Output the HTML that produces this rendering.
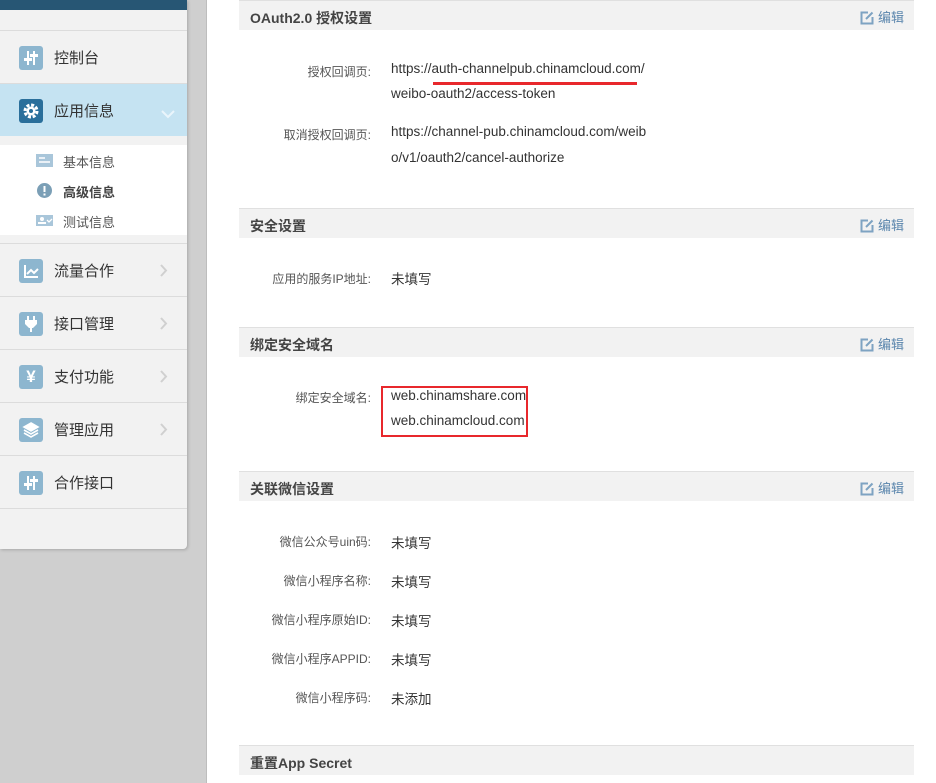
<!DOCTYPE html>
<html><head><meta charset="utf-8"><style>
*{margin:0;padding:0;box-sizing:border-box}
body{width:936px;height:783px;overflow:hidden;background:#fff;font-family:"Liberation Sans","Noto Sans CJK SC",sans-serif;position:relative}
.gbg{position:absolute;left:0;top:0;width:207px;height:783px;background:#cfcfcf;border-right:1px solid #bdbdbd}
.side{position:absolute;left:0;top:0;width:187px;height:549px;background:#f2f2f2;border-radius:0 0 4px 0;box-shadow:1px 1px 3px rgba(0,0,0,.2)}
.topbar{position:absolute;left:0;top:0;width:187px;height:10px;background:#275674}
.item{position:absolute;left:0;width:187px;height:53px;border-top:1px solid #dcdcdc;font-size:15px;color:#333}
.item .ic{position:absolute;left:19px;top:15px;width:24px;height:24px;border-radius:3px;background:#8db6cf}
.item .ic svg{position:absolute;left:0;top:0}
.item .t{position:absolute;left:54px;top:16px}
.item .ar{position:absolute;left:160px;top:20px}
.active{background:#c5e3f2}
.active .ic{background:#2a6f9b}
.sub{position:absolute;left:0;top:145px;width:187px;height:90px;background:#fff;font-size:13px;color:#555}
.sub div{position:absolute;left:63px}
.hd{position:absolute;left:239px;width:675px;height:30px;background:#f2f2f2;border-top:1px solid #e0e0e0;font-size:14px;font-weight:bold;color:#444}
.hd span{position:absolute;left:11px;top:7px}
.hd .ed{position:absolute;right:10px;top:6px;font-weight:normal;font-size:13px;color:#5b86ad}
.hd .ed svg{vertical-align:-3px;margin-right:4px}
.lb{position:absolute;right:565px;font-size:12px;color:#555;white-space:nowrap}
.v{position:absolute;left:391px;font-size:13.5px;color:#333;white-space:nowrap}
</style></head><body>
<div class="gbg"></div>
<div class="side">
<div class="topbar"></div>
<div class="item" style="top:30px"><div class="ic"><svg width="24" height="24"><g stroke="#fff" stroke-width="2"><line x1="9" y1="5" x2="9" y2="19"/><line x1="15" y1="5" x2="15" y2="19"/></g><g fill="#fff"><rect x="5" y="12" width="8" height="3"/><rect x="11" y="8" width="8" height="3"/></g></svg></div><div class="t">控制台</div></div>
<div class="item active" style="top:83px"><div class="ic"><svg width="24" height="24"><circle cx="12" cy="12" r="6" fill="none" stroke="#fff" stroke-width="3" stroke-dasharray="3 1.7"/><circle cx="12" cy="12" r="4.5" fill="#fff"/><circle cx="12" cy="12" r="2" fill="#2a6f9b"/></svg></div><div class="t">应用信息</div><div class="ar" style="left:161px;top:22px"><svg width="14" height="9"><path d="M1 1l6 6 6-6" fill="none" stroke="#eaf5fb" stroke-width="2"/></svg></div></div>
<div class="sub">
<div style="top:7px"><svg style="position:absolute;left:-27px;top:2px" width="17" height="13"><rect width="17" height="13" fill="#a9c6da"/><g stroke="#fff" stroke-width="1.5"><line x1="3" y1="4" x2="9" y2="4"/><line x1="3" y1="8" x2="14" y2="8"/></g></svg>基本信息</div>
<div style="top:37px;font-weight:bold;color:#444"><svg style="position:absolute;left:-26px;top:1px" width="15" height="15"><circle cx="7.5" cy="7.5" r="7.5" fill="#7b9fb6"/><rect x="6.5" y="3" width="2" height="6" fill="#fff"/><rect x="6.5" y="10.5" width="2" height="2" fill="#fff"/></svg>高级信息</div>
<div style="top:67px"><svg style="position:absolute;left:-27px;top:3px" width="17" height="11"><rect width="17" height="11" fill="#a9c6da"/><circle cx="6" cy="4" r="2" fill="#fff"/><rect x="2" y="7" width="8" height="2" fill="#fff"/><path d="M11 5l2 2 3-3" stroke="#fff" fill="none" stroke-width="1.3"/></svg>测试信息</div>
</div>
<div class="item" style="top:243px"><div class="ic"><svg width="24" height="24"><path d="M6 6v12h13M8 15l4-4 3 3 4-4" fill="none" stroke="#fff" stroke-width="2"/></svg></div><div class="t">流量合作</div><div class="ar"><svg width="8" height="13"><path d="M1 1l5 5.5L1 12" fill="none" stroke="#d0d0d0" stroke-width="2"/></svg></div></div>
<div class="item" style="top:296px"><div class="ic"><svg width="24" height="24"><g fill="#fff"><rect x="8" y="4" width="2" height="4"/><rect x="14" y="4" width="2" height="4"/><path d="M6 8h12v4l-4 4h-1v4h-2v-4h-1l-4-4z"/></g></svg></div><div class="t">接口管理</div><div class="ar"><svg width="8" height="13"><path d="M1 1l5 5.5L1 12" fill="none" stroke="#d0d0d0" stroke-width="2"/></svg></div></div>
<div class="item" style="top:349px"><div class="ic" style="color:#fff;font-size:17px;text-align:center;line-height:24px;font-weight:bold">¥</div><div class="t">支付功能</div><div class="ar"><svg width="8" height="13"><path d="M1 1l5 5.5L1 12" fill="none" stroke="#d0d0d0" stroke-width="2"/></svg></div></div>
<div class="item" style="top:402px"><div class="ic"><svg width="24" height="24"><g fill="none" stroke="#fff" stroke-width="1.6"><path d="M12 5l7 4-7 4-7-4z" fill="#fff"/><path d="M5 12l7 4 7-4M5 15l7 4 7-4"/></g></svg></div><div class="t">管理应用</div><div class="ar"><svg width="8" height="13"><path d="M1 1l5 5.5L1 12" fill="none" stroke="#d0d0d0" stroke-width="2"/></svg></div></div>
<div class="item" style="top:455px"><div class="ic"><svg width="24" height="24"><g stroke="#fff" stroke-width="2"><line x1="9" y1="5" x2="9" y2="19"/><line x1="15" y1="5" x2="15" y2="19"/></g><g fill="#fff"><rect x="5" y="12" width="8" height="3"/><rect x="11" y="8" width="8" height="3"/></g></svg></div><div class="t">合作接口</div></div>
<div class="item" style="top:508px;height:1px"></div>
</div>

<div class="hd" style="top:0"><span>OAuth2.0 授权设置</span><div class="ed"><svg width="14" height="14"><path d="M8 1.5H1.5v11h11V6" fill="none" stroke="#7ea3c2" stroke-width="2"/><path d="M6 8l6.5-6.5" stroke="#7ea3c2" stroke-width="2"/></svg>编辑</div></div>
<div class="lb" style="top:63px">授权回调页:</div>
<div class="v" style="top:61px">https://auth-channelpub.chinamcloud.com/</div>
<div style="position:absolute;left:433px;top:82px;width:204px;height:3px;background:#e8282c"></div>
<div class="v" style="top:86px">weibo-oauth2/access-token</div>
<div class="lb" style="top:126px">取消授权回调页:</div>
<div class="v" style="top:124px">https://channel-pub.chinamcloud.com/weib</div>
<div class="v" style="top:150px">o/v1/oauth2/cancel-authorize</div>

<div class="hd" style="top:208px"><span>安全设置</span><div class="ed"><svg width="14" height="14"><path d="M8 1.5H1.5v11h11V6" fill="none" stroke="#7ea3c2" stroke-width="2"/><path d="M6 8l6.5-6.5" stroke="#7ea3c2" stroke-width="2"/></svg>编辑</div></div>
<div class="lb" style="top:270px">应用的服务IP地址:</div>
<div class="v" style="top:268px">未填写</div>

<div class="hd" style="top:327px"><span>绑定安全域名</span><div class="ed"><svg width="14" height="14"><path d="M8 1.5H1.5v11h11V6" fill="none" stroke="#7ea3c2" stroke-width="2"/><path d="M6 8l6.5-6.5" stroke="#7ea3c2" stroke-width="2"/></svg>编辑</div></div>
<div class="lb" style="top:389px">绑定安全域名:</div>
<div style="position:absolute;left:381px;top:386px;width:147px;height:51px;border:2px solid #e8282c"></div>
<div class="v" style="top:388px">web.chinamshare.com</div>
<div class="v" style="top:413px">web.chinamcloud.com</div>

<div class="hd" style="top:471px"><span>关联微信设置</span><div class="ed"><svg width="14" height="14"><path d="M8 1.5H1.5v11h11V6" fill="none" stroke="#7ea3c2" stroke-width="2"/><path d="M6 8l6.5-6.5" stroke="#7ea3c2" stroke-width="2"/></svg>编辑</div></div>
<div class="lb" style="top:533px">微信公众号uin码:</div><div class="v" style="top:532px">未填写</div>
<div class="lb" style="top:572px">微信小程序名称:</div><div class="v" style="top:571px">未填写</div>
<div class="lb" style="top:611px">微信小程序原始ID:</div><div class="v" style="top:610px">未填写</div>
<div class="lb" style="top:650px">微信小程序APPID:</div><div class="v" style="top:649px">未填写</div>
<div class="lb" style="top:689px">微信小程序码:</div><div class="v" style="top:688px">未添加</div>

<div class="hd" style="top:745px"><span>重置App Secret</span></div>
</body></html>
